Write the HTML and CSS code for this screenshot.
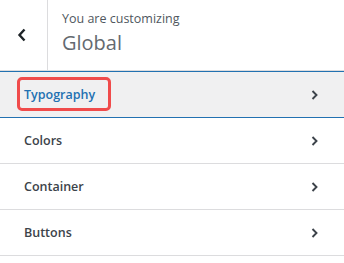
FILE: index.html
```html
<!DOCTYPE html>
<html lang="en">
<head>
    <meta charset="UTF-8">
    <title>Customizer - Global</title>
    <link rel="stylesheet" href="styles.css">
</head>
<body>
    <div class="panel">
        <div class="header">
            <button class="back" aria-label="Back">
                <svg width="10" height="14" viewBox="0 0 10 14"><path d="M7.5 1.5 L2.5 7 L7.5 12.5" fill="none" stroke="#1d2327" stroke-width="2.4"/></svg>
            </button>
            <div class="title">
                <span class="label">You are customizing</span>
                <h2>Global</h2>
            </div>
        </div>
        <ul class="sections">
            <li class="section active"><span class="name highlight">Typography</span><svg class="arrow" width="7" height="10" viewBox="0 0 7 10"><path d="M1.5 1 L5.5 5 L1.5 9" fill="none" stroke="#3c434a" stroke-width="1.9"/></svg></li>
            <li class="section"><span class="name">Colors</span><svg class="arrow" width="7" height="10" viewBox="0 0 7 10"><path d="M1.5 1 L5.5 5 L1.5 9" fill="none" stroke="#3c434a" stroke-width="1.9"/></svg></li>
            <li class="section"><span class="name">Container</span><svg class="arrow" width="7" height="10" viewBox="0 0 7 10"><path d="M1.5 1 L5.5 5 L1.5 9" fill="none" stroke="#3c434a" stroke-width="1.9"/></svg></li>
            <li class="section"><span class="name">Buttons</span><svg class="arrow" width="7" height="10" viewBox="0 0 7 10"><path d="M1.5 1 L5.5 5 L1.5 9" fill="none" stroke="#3c434a" stroke-width="1.9"/></svg></li>
        </ul>
    </div>
</body>
</html>
```

FILE: styles.css
```css
body {
    margin: 0;
    background: #fff;
    font-family: 'Open Sans', 'Noto Sans', sans-serif;
}
.panel {
    width: 344px;
}
.header {
    display: flex;
    height: 70px;
    border-bottom: 1px solid #dcdcde;
}
.back {
    width: 48px;
    padding: 0;
    border: none;
    border-right: 1px solid #dcdcde;
    background: #fff;
    display: flex;
    align-items: center;
    justify-content: center;
    padding-right: 3px;
}
.title {
    padding: 10px 0 0 14px;
}
.label {
    display: block;
    font-size: 12.5px;
    color: #50575e;
    line-height: 17px;
}
.title h2 {
    margin: 3px 0 0;
    font-size: 20px;
    font-weight: 400;
    color: #646970;
    line-height: 26px;
}
.sections {
    list-style: none;
    margin: 0;
    padding: 0;
}
.section {
    display: flex;
    align-items: center;
    justify-content: space-between;
    height: 45px;
    padding: 0 24px;
    border-bottom: 1px solid #dcdcde;
    font-size: 12.5px;
    font-weight: 600;
    color: #3c434a;
}
.section.active {
    background: #f0f0f1;
    color: #2271b1;
    border-top: 1px solid #2271b1;
    border-bottom-color: #2271b1;
}
.highlight {
    position: relative;
}
.highlight::after {
    content: '';
    position: absolute;
    left: -7px;
    right: -16px;
    top: -9px;
    bottom: -8px;
    border: 3px solid #f04b4b;
    border-radius: 5px;
}
.arrow {
    margin-right: 2px;
}
```
